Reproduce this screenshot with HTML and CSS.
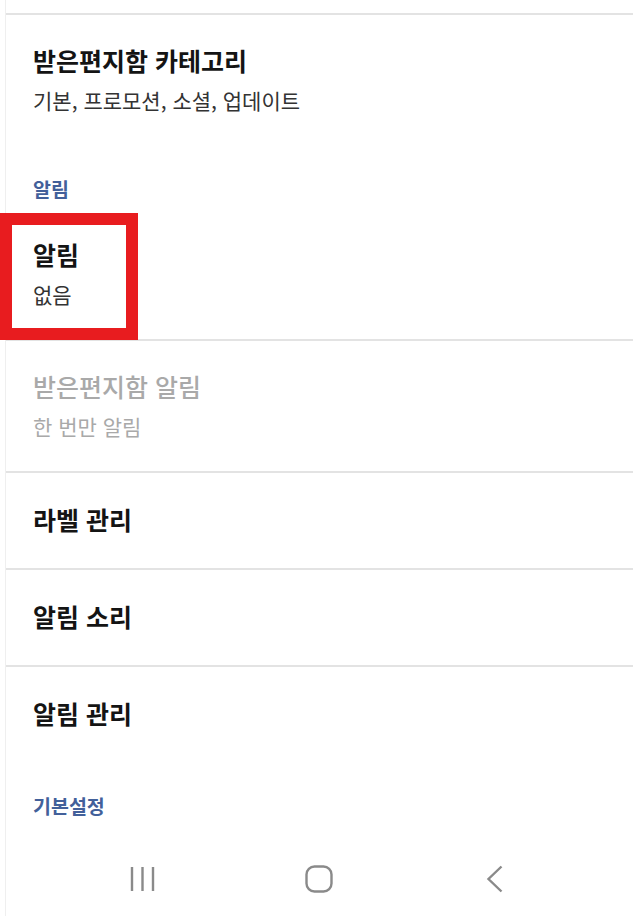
FILE: index.html
```html
<!DOCTYPE html>
<html lang="ko">
  <head>
    <meta charset="UTF-8" />
    <meta name="viewport" content="width=device-width, initial-scale=1.0" />
    <title>설정</title>
    <link rel="stylesheet" href="styles.css">
  </head>
  <body>
    <div class="screen">
      <div class="row row-top">
        <div class="title">받은편지함 카테고리</div>
        <div class="sub">기본, 프로모션, 소셜, 업데이트</div>
      </div>

      <div class="section">알림</div>

      <div class="row row-lined row-marked">
        <div class="title">알림</div>
        <div class="sub">없음</div>
        <span class="mark"></span>
      </div>

      <div class="row row-lined is-disabled">
        <div class="title">받은편지함 알림</div>
        <div class="sub">한 번만 알림</div>
      </div>

      <div class="row row-lined single">
        <div class="title">라벨 관리</div>
      </div>

      <div class="row row-lined single">
        <div class="title">알림 소리</div>
      </div>

      <div class="row single">
        <div class="title">알림 관리</div>
      </div>

      <div class="section">기본설정</div>

      <nav class="navbar">
        <div class="nav-btn">
          <svg width="26" height="26" viewBox="0 0 26 26">
            <path d="M2 1v24M12.5 1v24M23 1v24" stroke="#8a8a8a" stroke-width="2.4" fill="none" />
          </svg>
        </div>
        <div class="nav-btn">
          <svg width="28" height="28" viewBox="0 0 28 28">
            <rect x="1.5" y="1.5" width="25" height="25" rx="8" stroke="#8a8a8a" stroke-width="2.4" fill="none" />
          </svg>
        </div>
        <div class="nav-btn">
          <svg width="18" height="28" viewBox="0 0 18 28">
            <path d="M15.5 1.5L2.5 14l13 12.5" stroke="#8a8a8a" stroke-width="2.4" fill="none" />
          </svg>
        </div>
      </nav>
    </div>
  </body>
</html>
```

FILE: styles.css
```css
body {
  margin: 0;
  background: #ffffff;
  font-family: "Noto Sans CJK KR", "Noto Sans", sans-serif;
  color: #141414;
}
.screen {
  margin-left: 5px;
  border-left: 1px solid #efefef;
  padding-top: 13px;
  height: 916px;
  box-sizing: border-box;
  display: flex;
  flex-direction: column;
}
.row {
  position: relative;
  padding: 29px 27px 30px;
}
.row-top {
  border-top: 2px solid #e3e3e3;
}
.row-lined {
  border-bottom: 2px solid #e3e3e3;
}
.single {
  padding-top: 30px;
  padding-bottom: 33px;
}
.title {
  font-size: 25px;
  line-height: 32px;
  font-weight: 700;
}
.sub {
  margin-top: 9px;
  font-size: 21px;
  line-height: 30px;
  color: #333333;
}
.is-disabled .title {
  font-weight: 500;
  color: #a9a9a9;
}
.is-disabled .sub {
  color: #a9a9a9;
}
.section {
  padding: 30px 27px 6px;
  font-size: 19.5px;
  line-height: 28px;
  font-weight: 700;
  color: #42609a;
}
.mark {
  position: absolute;
  left: -6px;
  top: 4px;
  width: 138px;
  height: 127px;
  box-sizing: border-box;
  border: 12px solid #e81c1f;
}
.navbar {
  margin-top: auto;
  height: 74px;
  padding: 0 50px 0 49px;
  display: grid;
  grid-template-columns: repeat(3, 1fr);
  align-items: center;
  justify-items: center;
}
.nav-btn {
  display: flex;
}
```
